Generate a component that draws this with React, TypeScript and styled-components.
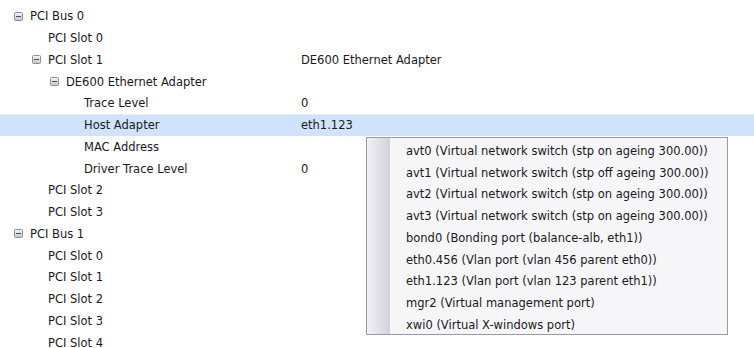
import React from "react";
import styled, { createGlobalStyle } from "styled-components";

type Node = {
  label: string;
  level: number;
  expandable?: boolean;
  value?: string;
  selected?: boolean;
};

const rows: Node[] = [
  { label: "PCI Bus 0", level: 0, expandable: true },
  { label: "PCI Slot 0", level: 1 },
  { label: "PCI Slot 1", level: 1, expandable: true, value: "DE600 Ethernet Adapter" },
  { label: "DE600 Ethernet Adapter", level: 2, expandable: true },
  { label: "Trace Level", level: 3, value: "0" },
  { label: "Host Adapter", level: 3, value: "eth1.123", selected: true },
  { label: "MAC Address", level: 3 },
  { label: "Driver Trace Level", level: 3, value: "0" },
  { label: "PCI Slot 2", level: 1 },
  { label: "PCI Slot 3", level: 1 },
  { label: "PCI Bus 1", level: 0, expandable: true },
  { label: "PCI Slot 0", level: 1 },
  { label: "PCI Slot 1", level: 1 },
  { label: "PCI Slot 2", level: 1 },
  { label: "PCI Slot 3", level: 1 },
  { label: "PCI Slot 4", level: 1 },
];

const options = [
  "avt0 (Virtual network switch (stp on ageing 300.00))",
  "avt1 (Virtual network switch (stp off ageing 300.00))",
  "avt2 (Virtual network switch (stp on ageing 300.00))",
  "avt3 (Virtual network switch (stp on ageing 300.00))",
  "bond0 (Bonding port (balance-alb, eth1))",
  "eth0.456 (Vlan port (vlan 456 parent eth0))",
  "eth1.123 (Vlan port (vlan 123 parent eth1))",
  "mgr2 (Virtual management port)",
  "xwi0 (Virtual X-windows port)",
];

const ROW_H = 21.75;

const GlobalStyle = createGlobalStyle`
  html, body {
    margin: 0;
    padding: 0;
    background: #fff;
  }
  body {
    font-family: "DejaVu Sans", Verdana, sans-serif;
    font-size: 11.5px;
    color: #1a1820;
  }
`;

const Tree = styled.div`
  position: relative;
  width: 754px;
  height: 348px;
  overflow: hidden;
  padding-top: 5px;
  box-sizing: border-box;
`;

const Row = styled.div<{ $selected?: boolean }>`
  display: grid;
  grid-template-columns: 300px 1fr;
  height: ${ROW_H}px;
  align-items: center;
  box-sizing: border-box;
  background: ${(p) => (p.$selected ? "#cfe4fa" : "transparent")};
  border-top: 1px solid ${(p) => (p.$selected ? "#e3effc" : "transparent")};
`;

const Label = styled.div<{ $level: number }>`
  display: flex;
  align-items: center;
  gap: 7px;
  padding-left: ${(p) => 14 + p.$level * 18}px;
  white-space: nowrap;
`;

const Spacer = styled.span`
  width: 9px;
  flex: none;
`;

const Value = styled.div`
  padding-left: 1px;
  white-space: nowrap;
`;

const Menu = styled.ul`
  position: absolute;
  left: 366px;
  top: 137px;
  width: 362px;
  margin: 0;
  padding: 0;
  list-style: none;
  box-sizing: border-box;
  border: 1px solid #9b99a8;
  background: linear-gradient(
      to right,
      #f3f3f6 0px,
      #e6e6ec 8px,
      #d2d2de 23px,
      #f6f6f9 23px
    );
`;

const Option = styled.li`
  display: flex;
  align-items: center;
  box-sizing: border-box;
  height: ${ROW_H}px;
  padding: 4px 0 0 39px;
  white-space: nowrap;
`;

const Expander: React.FC = () => (
  <svg width="9" height="9" viewBox="0 0 9 9" style={{ flex: "none" }}>
    <defs>
      <linearGradient id="exp" x1="0" y1="0" x2="0" y2="1">
        <stop offset="0" stopColor="#f6f6f6" />
        <stop offset="1" stopColor="#c2c5cb" />
      </linearGradient>
    </defs>
    <rect x="0.5" y="0.5" width="8" height="8" rx="1" fill="url(#exp)" stroke="#8e9097" />
    <rect x="2" y="4" width="5" height="1" fill="#4a4d55" />
  </svg>
);

const App: React.FC = () => {
  return (
    <>
      <GlobalStyle />
      <Tree>
        {rows.map((r, i) => (
          <Row key={i} $selected={r.selected}>
            <Label $level={r.level}>
              {r.expandable ? <Expander /> : <Spacer />}
              <span>{r.label}</span>
            </Label>
            <Value>{r.value}</Value>
          </Row>
        ))}
        <Menu>
          {options.map((o) => (
            <Option key={o}>{o}</Option>
          ))}
        </Menu>
      </Tree>
    </>
  );
};

export default App;
